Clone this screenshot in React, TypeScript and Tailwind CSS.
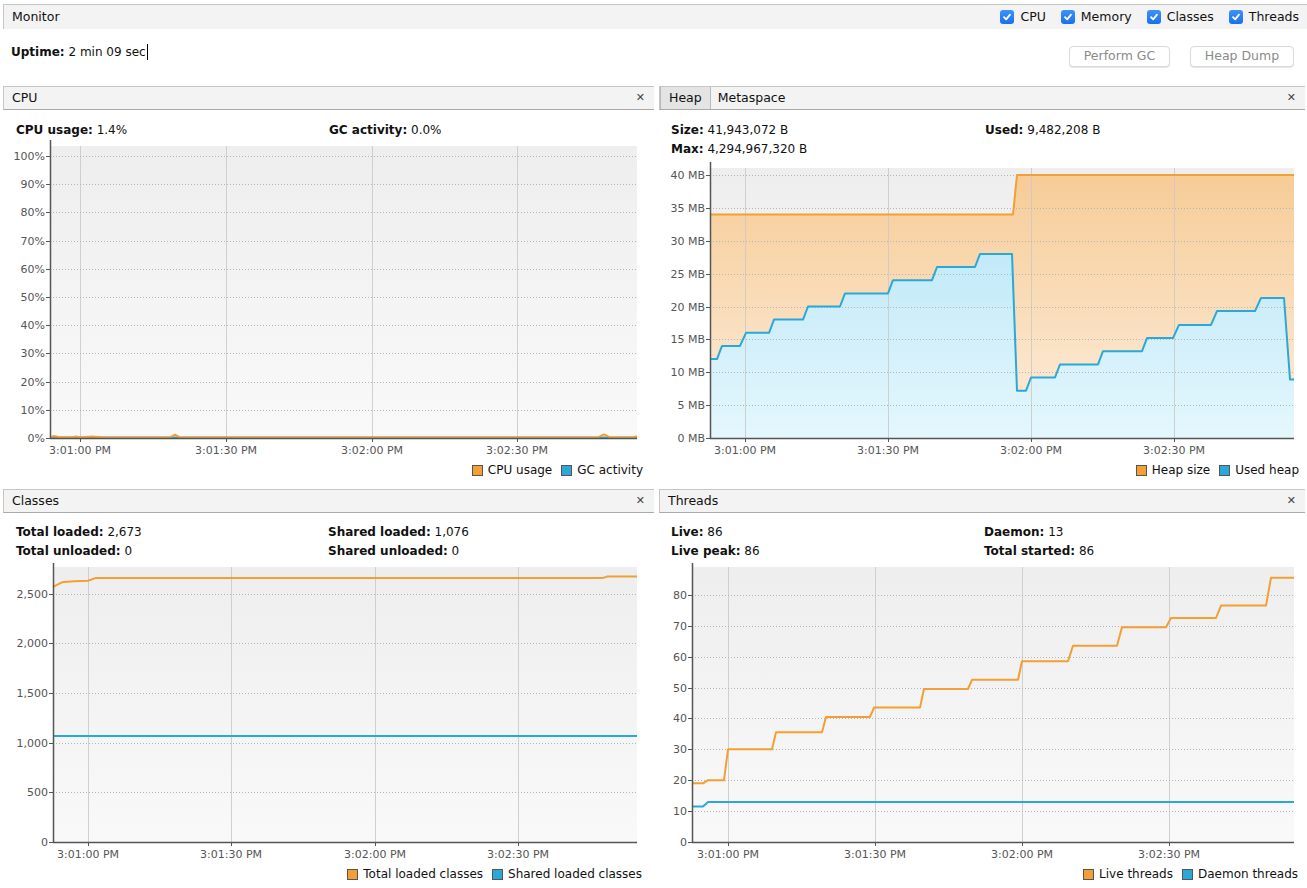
import React from 'react';

type Pt = [number, number];
type Series = { pts: Pt[]; stroke: string; fill?: string };

type ChartProps = {
  id: string;
  vx: number;
  vy: number;
  w: number;
  h: number;
  axisX: number;
  right: number;
  top: number;
  bottom: number;
  k: number;
  yTicks: [number, string][];
  xTicks: [number, string][];
  series: Series[];
};

function Chart({ id, vx, vy, w, h, axisX, right, top, bottom, k, yTicks, xTicks, series }: ChartProps) {
  const toY = (v: number) => bottom - v * k;
  const line = (pts: Pt[]) => pts.map(([x, v]) => `${x},${toY(v).toFixed(1)}`).join(' ');
  return (
    <svg width={w} height={h} viewBox={`${vx} ${vy} ${w} ${h}`} className="block">
      <defs>
        <linearGradient id={`${id}-bg`} gradientUnits="userSpaceOnUse" x1="0" y1={top} x2="0" y2={bottom}>
          <stop offset="0" stopColor="#eeeeee" />
          <stop offset="1" stopColor="#f9f9f9" />
        </linearGradient>
        <linearGradient id={`${id}-or`} gradientUnits="userSpaceOnUse" x1="0" y1={top} x2="0" y2={bottom}>
          <stop offset="0" stopColor="#f6cb95" />
          <stop offset="1" stopColor="#fdeedd" />
        </linearGradient>
        <linearGradient id={`${id}-bl`} gradientUnits="userSpaceOnUse" x1="0" y1={top} x2="0" y2={bottom}>
          <stop offset="0" stopColor="#b3e3f6" />
          <stop offset="1" stopColor="#e4f7fd" />
        </linearGradient>
      </defs>
      <rect x={axisX} y={top} width={right - axisX} height={bottom - top} fill={`url(#${id}-bg)`} />
      {series.map((s, i) =>
        s.fill ? (
          <polygon
            key={`f${i}`}
            points={`${s.pts[0][0]},${bottom} ${line(s.pts)} ${s.pts[s.pts.length - 1][0]},${bottom}`}
            fill={`url(#${id}-${s.fill})`}
          />
        ) : null
      )}
      {xTicks.map(([x]) => (
        <line key={`gx${x}`} x1={x + 0.5} x2={x + 0.5} y1={top} y2={bottom} stroke="#c9c9c9" strokeOpacity="0.85" />
      ))}
      {yTicks.map(([v]) => (
        <line
          key={`gy${v}`}
          x1={axisX}
          x2={right}
          y1={Math.round(toY(v)) + 0.5}
          y2={Math.round(toY(v)) + 0.5}
          stroke="#b5b5b5"
          strokeDasharray="1 2"
        />
      ))}
      {series.map((s, i) => (
        <polyline key={`l${i}`} points={line(s.pts)} fill="none" stroke={s.stroke} strokeWidth="2" strokeLinejoin="round" />
      ))}
      <line x1={axisX + 0.5} x2={axisX + 0.5} y1={top - 8} y2={bottom} stroke="#555" strokeWidth="1.5" />
      <line x1={axisX} x2={right} y1={bottom + 0.5} y2={bottom + 0.5} stroke="#555" strokeWidth="1.5" />
      {yTicks.map(([v, label]) => (
        <g key={`ty${v}`}>
          <line x1={axisX - 4} x2={axisX} y1={Math.round(toY(v)) + 0.5} y2={Math.round(toY(v)) + 0.5} stroke="#555" />
          <text
            x={axisX - 5}
            y={toY(v) + 4}
            textAnchor="end"
            fontSize="11"
            fill="#555"
            fontFamily="'DejaVu Sans', sans-serif"
          >
            {label}
          </text>
        </g>
      ))}
      {xTicks.map(([x, label]) => (
        <g key={`tx${x}`}>
          <line x1={x + 0.5} x2={x + 0.5} y1={bottom} y2={bottom + 4} stroke="#555" />
          <text x={x} y={bottom + 16} textAnchor="middle" fontSize="11" fill="#555" fontFamily="'DejaVu Sans', sans-serif">
            {label}
          </text>
        </g>
      ))}
    </svg>
  );
}

function Check({ label }: { label: string }) {
  return (
    <span className="flex items-center gap-[6px]">
      <span className="flex h-[14px] w-[14px] items-center justify-center rounded-[3px] bg-gradient-to-b from-[#3d93f8] to-[#1a6ff0]">
        <svg width="10" height="10" viewBox="0 0 10 10">
          <path d="M2 5.2 L4.2 7.4 L8 2.6" fill="none" stroke="#fff" strokeWidth="1.8" strokeLinecap="round" strokeLinejoin="round" />
        </svg>
      </span>
      <span>{label}</span>
    </span>
  );
}

function Header({ children, close = true }: { children: React.ReactNode; close?: boolean }) {
  return (
    <div className="flex h-[24px] items-stretch border-t border-l border-b border-t-[#c6c6c6] border-l-[#c6c6c6] border-b-[#a9a9a9] bg-[#f3f3f3] text-[12.5px]">
      <div className="flex flex-1 items-stretch">{children}</div>
      {close && <span className="flex items-center pr-[9px] text-[11px] text-[#444]">✕</span>}
    </div>
  );
}

function Legend({ items }: { items: [string, string][] }) {
  return (
    <div className="flex h-[20px] items-center justify-end gap-[9px] text-[12px]">
      {items.map(([c, l]) => (
        <span key={l} className="flex items-center gap-[5px]">
          <span className="h-[11px] w-[11px] border border-[#555]" style={{ background: c }} />
          {l}
        </span>
      ))}
    </div>
  );
}

const OR = '#f39f33';
const BL = '#2aa8da';

const timeLabels = ['3:01:00 PM', '3:01:30 PM', '3:02:00 PM', '3:02:30 PM'];
const ticks = (xs: number[]): [number, string][] => xs.map((x, i) => [x, timeLabels[i]]);

const heapSize: Pt[] = [
  [710, 34],
  [1013, 34],
  [1017, 40],
  [1294, 40],
];
const usedHeap: Pt[] = [
  [710, 12], [717, 12], [722, 14], [740, 14], [746, 16], [769, 16], [774, 18], [803, 18],
  [808, 20], [840, 20], [845, 22], [888, 22], [893, 24], [932, 24], [937, 26], [975, 26],
  [980, 28], [1012, 28], [1017, 7.2], [1026, 7.2], [1031, 9.2], [1055, 9.2], [1060, 11.2],
  [1098, 11.2], [1103, 13.2], [1142, 13.2], [1147, 15.2], [1173, 15.2], [1179, 17.2],
  [1211, 17.2], [1217, 19.3], [1255, 19.3], [1261, 21.3], [1284, 21.3], [1290, 8.9], [1294, 8.9],
];
const liveThreads: Pt[] = [
  [692, 19], [703, 19], [708, 20], [724, 20], [728, 30], [772, 30], [776, 35.5], [822, 35.5],
  [826, 40.5], [870, 40.5], [874, 43.5], [920, 43.5], [924, 49.5], [968, 49.5], [972, 52.5],
  [1018, 52.5], [1022, 58.5], [1068, 58.5], [1073, 63.5], [1117, 63.5], [1122, 69.5],
  [1166, 69.5], [1171, 72.5], [1216, 72.5], [1221, 76.5], [1266, 76.5], [1271, 85.5], [1294, 85.5],
];
const daemonThreads: Pt[] = [
  [692, 11.5],
  [703, 11.5],
  [708, 12.9],
  [1294, 12.9],
];
const totalClasses: Pt[] = [
  [53, 2570],
  [62, 2615],
  [74, 2625],
  [88, 2630],
  [96, 2660],
  [603, 2660],
  [607, 2673],
  [637, 2673],
];
const sharedClasses: Pt[] = [
  [53, 1066],
  [637, 1066],
];
const cpuPts: Pt[] = [
  [50, 0.2], [54, 0.7], [60, 0.3], [66, 0.3], [72, 0.2], [76, 0.5], [80, 0.2], [92, 0.5],
  [98, 0.4], [104, 0.2], [170, 0.2], [175, 1.2], [180, 0.2], [598, 0.2], [604, 1.3], [610, 0.2],
  [633, 0.2], [637, 0.6],
];
const gcPts: Pt[] = [
  [50, 0.15],
  [637, 0.15],
];

function Stat({ k, v }: { k: string; v: string }) {
  return (
    <div>
      <b>{k}</b> {v}
    </div>
  );
}

export default function App() {
  return (
    <div className="relative h-[888px] w-[1307px] overflow-hidden bg-white font-['DejaVu_Sans','Noto_Sans',sans-serif] text-[12px] text-[#111]">
      {/* Monitor bar */}
      <div className="ml-[3px] mt-[4px] flex h-[25px] items-center justify-between border-t border-l border-[#c6c6c6] bg-[#f3f3f3] pl-[8px] pr-[8px] text-[12.5px]">
        <span>Monitor</span>
        <div className="flex items-center gap-[15px]">
          <Check label="CPU" />
          <Check label="Memory" />
          <Check label="Classes" />
          <Check label="Threads" />
        </div>
      </div>
      <div className="flex h-[57px] items-start justify-between pl-[11px] pr-[13px]">
        <div className="flex items-center pt-[14px] leading-[18px]">
          <b>Uptime:</b>&nbsp;2 min 09 sec
          <span className="ml-px inline-block h-[16px] w-px bg-black" />
        </div>
        <div className="mt-[17px] flex gap-[20px]">
          <button className="h-[21px] w-[101px] rounded-[4px] border border-[#dadada] bg-white text-[12.5px] text-[#8a8a8a] shadow-[0_1px_0_#e6e6e6]">
            Perform GC
          </button>
          <button className="h-[21px] w-[104px] rounded-[4px] border border-[#dadada] bg-white text-[12.5px] text-[#8a8a8a] shadow-[0_1px_0_#e6e6e6]">
            Heap Dump
          </button>
        </div>
      </div>

      <div className="grid grid-cols-[651px_646px] grid-rows-[403px_399px] gap-x-[5px] pl-[3px]">
        {/* CPU */}
        <div className="flex flex-col">
          <Header>
            <span className="flex items-center pl-[8px]">CPU</span>
          </Header>
          <div className="grid h-[30px] grid-cols-[313px_1fr] content-start pl-[13px] pt-[11px] leading-[19px]">
            <Stat k="CPU usage:" v="1.4%" />
            <Stat k="GC activity:" v="0.0%" />
          </div>
          <Chart
            id="cpu"
            vx={3}
            vy={140}
            w={651}
            h={320}
            axisX={50}
            right={637}
            top={146}
            bottom={438}
            k={2.82}
            yTicks={[0, 10, 20, 30, 40, 50, 60, 70, 80, 90, 100].map((v) => [v, `${v}%`] as [number, string])}
            xTicks={ticks([80, 226, 372, 517])}
            series={[
              { pts: gcPts, stroke: BL, fill: 'bl' },
              { pts: cpuPts, stroke: OR },
            ]}
          />
          <div className="pr-[11px]">
            <Legend items={[[OR, 'CPU usage'], [BL, 'GC activity']]} />
          </div>
        </div>

        {/* Heap */}
        <div className="flex flex-col">
          <Header>
            <span className="flex items-center border-r border-l border-[#b9b9b9] bg-[#e4e4e4] px-[8px]">Heap</span>
            <span className="flex items-center pl-[7px]">Metaspace</span>
          </Header>
          <div className="grid h-[52px] grid-cols-[314px_1fr] content-start pl-[12px] pt-[11px] leading-[19px]">
            <Stat k="Size:" v="41,943,072 B" />
            <Stat k="Used:" v="9,482,208 B" />
            <Stat k="Max:" v="4,294,967,320 B" />
          </div>
          <Chart
            id="heap"
            vx={659}
            vy={162}
            w={646}
            h={298}
            axisX={710}
            right={1294}
            top={168}
            bottom={438}
            k={6.575}
            yTicks={[0, 5, 10, 15, 20, 25, 30, 35, 40].map((v) => [v, `${v} MB`] as [number, string])}
            xTicks={ticks([745, 888, 1031, 1174])}
            series={[
              { pts: heapSize, stroke: OR, fill: 'or' },
              { pts: usedHeap, stroke: BL, fill: 'bl' },
            ]}
          />
          <div className="pr-[6px]">
            <Legend items={[[OR, 'Heap size'], [BL, 'Used heap']]} />
          </div>
        </div>

        {/* Classes */}
        <div className="flex flex-col">
          <Header>
            <span className="flex items-center pl-[8px]">Classes</span>
          </Header>
          <div className="grid h-[50px] grid-cols-[312px_1fr] content-start pl-[13px] pt-[10px] leading-[19px]">
            <Stat k="Total loaded:" v="2,673" />
            <Stat k="Shared loaded:" v="1,076" />
            <Stat k="Total unloaded:" v="0" />
            <Stat k="Shared unloaded:" v="0" />
          </div>
          <Chart
            id="cls"
            vx={3}
            vy={563}
            w={651}
            h={299}
            axisX={53}
            right={637}
            top={567}
            bottom={842}
            k={0.0993}
            yTicks={[
              [0, '0'],
              [500, '500'],
              [1000, '1,000'],
              [1500, '1,500'],
              [2000, '2,000'],
              [2500, '2,500'],
            ]}
            xTicks={ticks([88, 231, 375, 518])}
            series={[
              { pts: totalClasses, stroke: OR },
              { pts: sharedClasses, stroke: BL },
            ]}
          />
          <div className="pr-[12px] pt-[2px]">
            <Legend items={[[OR, 'Total loaded classes'], [BL, 'Shared loaded classes']]} />
          </div>
        </div>

        {/* Threads */}
        <div className="flex flex-col">
          <Header>
            <span className="flex items-center pl-[8px]">Threads</span>
          </Header>
          <div className="grid h-[50px] grid-cols-[313px_1fr] content-start pl-[12px] pt-[10px] leading-[19px]">
            <Stat k="Live:" v="86" />
            <Stat k="Daemon:" v="13" />
            <Stat k="Live peak:" v="86" />
            <Stat k="Total started:" v="86" />
          </div>
          <Chart
            id="thr"
            vx={659}
            vy={563}
            w={646}
            h={299}
            axisX={692}
            right={1294}
            top={567}
            bottom={842}
            k={3.09}
            yTicks={[0, 10, 20, 30, 40, 50, 60, 70, 80].map((v) => [v, `${v}`] as [number, string])}
            xTicks={ticks([728, 875, 1022, 1169])}
            series={[
              { pts: liveThreads, stroke: OR },
              { pts: daemonThreads, stroke: BL },
            ]}
          />
          <div className="pr-[7px] pt-[2px]">
            <Legend items={[[OR, 'Live threads'], [BL, 'Daemon threads']]} />
          </div>
        </div>
      </div>
    </div>
  );
}
